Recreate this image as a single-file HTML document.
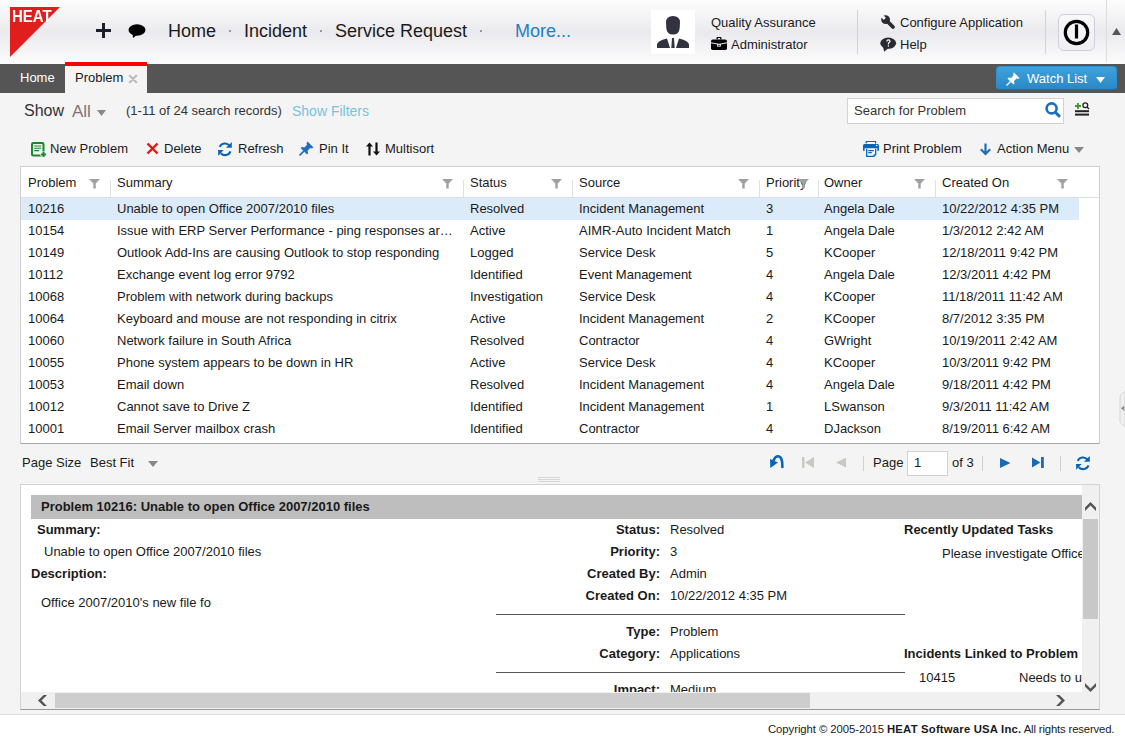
<!DOCTYPE html>
<html><head><meta charset="utf-8">
<style>
*{margin:0;padding:0;box-sizing:border-box}
html,body{width:1125px;height:744px;overflow:hidden;background:#f4f4f4;font-family:"Liberation Sans",sans-serif;color:#1a1a1a}
.a{position:absolute}
.t{position:absolute;white-space:nowrap;line-height:1}
#hdr{position:absolute;left:0;top:0;width:1125px;height:64px;background:linear-gradient(#fdfdfd 0%,#f5f5f7 22%,#eaeaee 50%,#f4f4f6 78%,#fbfbfb 100%)}
#bar{position:absolute;left:0;top:64px;width:1125px;height:29px;background:#555}
.nav{font-size:18px;color:#1a1a1a}
.dot{position:absolute;width:2px;height:2px;background:#999}
.vsep{position:absolute;width:1px;background:#d4d4d8}
.h13{font-size:13px;color:#1a1a1a}
.grid{position:absolute;left:20px;top:166px;width:1080px;height:278px;background:#fff;border:1px solid #cfcfcf;border-bottom-color:#a8a8a8}
.hsep{position:absolute;top:13px;width:1px;height:17px;background:#e2e2e2}
.fil{position:absolute;top:12px}
.row{position:absolute;left:0;width:1058px;height:22px}
.c{position:absolute;font-size:13px;line-height:22px;white-space:nowrap;color:#1a1a1a}
</style></head><body>
<div id="hdr"></div>
<!-- logo -->
<svg class="a" style="left:10px;top:7px" width="51" height="51" viewBox="0 0 51 51"><path d="M0 0H50L0 50Z" fill="#e01e1e"/></svg>
<div class="t" style="left:12px;top:8px;font-size:16.5px;font-weight:bold;color:#fff;transform:scaleX(0.91);transform-origin:0 0">HEAT</div>
<!-- plus + bubble -->
<svg class="a" style="left:96px;top:23px" width="15" height="15" viewBox="0 0 15 15"><path d="M6 0h3v6h6v3H9v6H6V9H0V6h6z" fill="#1e1e2a"/></svg>
<svg class="a" style="left:128px;top:24px" width="18" height="15" viewBox="0 0 18 15"><ellipse cx="9" cy="6" rx="8.5" ry="5.8" fill="#000"/><path d="M4.5 9 L5 14 L9.5 10.5Z" fill="#000"/></svg>
<div class="t nav" style="left:168px;top:22px">Home</div>
<div class="dot" style="left:229px;top:30px"></div>
<div class="t nav" style="left:244px;top:22px">Incident</div>
<div class="dot" style="left:320px;top:30px"></div>
<div class="t nav" style="left:335px;top:22px">Service Request</div>
<div class="dot" style="left:480px;top:30px"></div>
<div class="t nav" style="left:515px;top:22px;color:#1f80c2">More...</div>
<!-- avatar -->
<div class="a" style="left:651px;top:10px;width:44px;height:44px;background:#fff"></div>
<svg class="a" style="left:651px;top:10px" width="44" height="44" viewBox="0 0 44 44"><path d="M15 12.5 Q15 6 22 6 Q29 6 29 12.5 L28.7 18 Q28.2 24.6 22 24.6 Q15.8 24.6 15.3 18 Z M6 38 V34.5 Q6 31 16 28.4 L19 38 Z M38 38 V34.5 Q38 31 28 28.4 L25 38 Z M21 28 H23 L23.7 38 H20.3Z" fill="#33333f"/></svg>
<div class="t h13" style="left:711px;top:16px">Quality Assurance</div>
<svg class="a" style="left:711px;top:37px" width="16" height="13" viewBox="0 0 16 13"><path d="M5.5 2.6V1Q5.5 0 6.5 0h3Q10.5 0 10.5 1V2.6Z M6.8 1.1V2.6h2.4V1.1Z" fill="#000" fill-rule="evenodd"/><rect x="0" y="2.5" width="16" height="10.5" rx="1.8" fill="#000"/><path d="M0 5.8 Q8 8.8 16 5.8" stroke="#fff" stroke-width="0.9" fill="none"/><rect x="6.2" y="7" width="3.6" height="2.6" fill="#fff"/><rect x="7.2" y="7.8" width="1.6" height="1" fill="#000"/></svg>
<div class="t h13" style="left:731px;top:38px">Administrator</div>
<div class="vsep" style="left:857px;top:10px;height:44px"></div>
<!-- wrench -->
<svg class="a" style="left:881px;top:15px" width="15" height="15" viewBox="0 0 15 15"><defs><mask id="wm"><rect width="15" height="15" fill="#fff"/><path d="M0.06 -2.06 L4.9 2.8 L2.8 4.9 L-2.06 0.06Z" fill="#000"/></mask></defs><g mask="url(#wm)" fill="#2a2a35"><circle cx="4.6" cy="4.6" r="4.4"/></g><path d="M5.5 5.5 L12 12" stroke="#2a2a35" stroke-width="3.8" stroke-linecap="round"/></svg>
<div class="t h13" style="left:900px;top:16px">Configure Application</div>
<svg class="a" style="left:880px;top:37px" width="17" height="15" viewBox="0 0 17 15"><ellipse cx="8.2" cy="6.2" rx="7.9" ry="5.6" fill="#2a2a35"/><path d="M3 10 L4.3 14.8 L8.5 11Z" fill="#2a2a35"/><path d="M6.3 4.6 Q6.3 2.3 8.4 2.3 Q10.6 2.3 10.6 4.3 Q10.6 5.5 9.4 6 Q8.9 6.3 8.9 7.4 H7.8 Q7.7 5.6 8.7 5 Q9.4 4.7 9.4 4.2 Q9.4 3.4 8.4 3.4 Q7.5 3.4 7.5 4.6Z" fill="#fff"/><rect x="7.8" y="8.3" width="1.2" height="1.3" fill="#fff"/></svg>
<div class="t h13" style="left:900px;top:38px">Help</div>
<div class="vsep" style="left:1045px;top:10px;height:44px"></div>
<!-- power -->
<div class="a" style="left:1058px;top:14px;width:37px;height:37px;border:1px solid #d0d0dc;border-radius:6px;background:linear-gradient(#f8f8fa,#efeff3)"></div>
<svg class="a" style="left:1063px;top:19px" width="27" height="27" viewBox="0 0 27 27"><circle cx="13.5" cy="13.5" r="11.2" stroke="#000" stroke-width="3.2" fill="none"/><rect x="11.9" y="5.5" width="3.2" height="14" fill="#000"/></svg>
<div class="vsep" style="left:1106px;top:0;height:62px;background:#dcdcdc"></div>
<svg class="a" style="left:1112px;top:28px" width="9" height="7" viewBox="0 0 9 7"><path d="M0 7 L4.5 0 L9 7Z" fill="#555"/></svg>

<div id="bar"></div>
<div class="t" style="left:20px;top:71px;font-size:13px;color:#fff">Home</div>
<div class="a" style="left:65px;top:62px;width:82px;height:31px;background:#f4f4f4;border-top:4px solid #f00"></div>
<div class="t" style="left:75px;top:71px;font-size:13px;color:#1a1a1a">Problem</div>
<svg class="a" style="left:128px;top:74px" width="10" height="10" viewBox="0 0 10 10"><path d="M1.8 1.8L8.2 8.2M8.2 1.8L1.8 8.2" stroke="#bdbdbd" stroke-width="2.3" stroke-linecap="round"/></svg>
<!-- watch list -->
<div class="a" style="left:996px;top:66px;width:121px;height:24px;border-radius:4px;background:linear-gradient(#3fa2dc,#2a88c6);border:1px solid #2f8fd0;border-bottom-color:#1f6ea6"></div>
<svg class="a" style="left:1006px;top:72px" width="14" height="14" viewBox="0 0 14 14"><path d="M8 0.5 L13.5 6 L12 7 L10.5 6.5 L8 9 L8.5 11.5 L7.5 12.5 L1.5 6.5 L2.5 5.5 L5 6 L7.5 3.5 L7 2Z" fill="#fff"/><path d="M4.5 9.5 L0.5 13.5" stroke="#fff" stroke-width="1.3"/></svg>
<div class="t" style="left:1027px;top:72px;font-size:13px;color:#fff">Watch List</div>
<svg class="a" style="left:1096px;top:77px" width="9" height="6" viewBox="0 0 9 6"><path d="M0 0H9L4.5 6Z" fill="#fff"/></svg>

<!-- show row -->
<div class="t" style="left:24px;top:103px;font-size:16px;color:#333">Show</div>
<div class="t" style="left:72px;top:103px;font-size:17px;color:#777">All</div>
<svg class="a" style="left:97px;top:110px" width="9" height="6" viewBox="0 0 9 6"><path d="M0 0H9L4.5 6Z" fill="#888"/></svg>
<div class="t" style="left:126px;top:104px;font-size:13px;color:#333">(1-11 of 24 search records)</div>
<div class="t" style="left:292px;top:104px;font-size:14px;color:#76c3df">Show Filters</div>
<!-- search -->
<div class="a" style="left:847px;top:98px;width:217px;height:26px;background:#fff;border:1px solid #d2d2d2"></div>
<div class="t" style="left:854px;top:104px;font-size:13px;color:#333">Search for Problem</div>
<svg class="a" style="left:1045px;top:102px" width="16" height="16" viewBox="0 0 16 16"><circle cx="6.6" cy="6.4" r="5" stroke="#1a6fbf" stroke-width="2.6" fill="none"/><path d="M10.3 10.2 L14 13.9" stroke="#1a6fbf" stroke-width="3" stroke-linecap="round"/></svg>
<svg class="a" style="left:1074px;top:101px" width="16" height="16" viewBox="0 0 16 16"><path d="M4 2v6M1 5h6" stroke="#3a9a2a" stroke-width="1.8"/><circle cx="11.3" cy="4.3" r="2.4" stroke="#222" stroke-width="1.3" fill="none"/><path d="M13 6 L15 8" stroke="#222" stroke-width="1.5"/><rect x="1" y="9.2" width="14" height="2" fill="#222"/><rect x="1" y="12.6" width="14" height="2" fill="#222"/></svg>

<!-- toolbar -->
<svg class="a" style="left:31px;top:142px" width="16" height="16" viewBox="0 0 16 16"><rect x="1" y="1" width="11.5" height="12.5" rx="1.2" fill="none" stroke="#17892a" stroke-width="2"/><path d="M3.2 4h7M3.2 6.3h7M3.2 8.6h5" stroke="#17892a" stroke-width="1.1"/><path d="M12.5 9.5v6M9.5 12.5h6" stroke="#f4f4f4" stroke-width="3.6"/><path d="M12.5 10v5M10 12.5h5" stroke="#17892a" stroke-width="2"/></svg>
<div class="t" style="left:50px;top:142px;font-size:13px;color:#1a1a1a">New Problem</div>
<svg class="a" style="left:146px;top:142px" width="13" height="13" viewBox="0 0 13 13"><path d="M1.5 1.5L11.5 11.5M11.5 1.5L1.5 11.5" stroke="#e11" stroke-width="2.4"/></svg>
<div class="t" style="left:164px;top:142px;font-size:13px;color:#1a1a1a">Delete</div>
<svg class="a" style="left:218px;top:142px" width="15" height="15" viewBox="0 0 15 15"><path d="M1.7 4.9 A5.8 5.8 0 0 1 11.5 3.6" stroke="#0b63b8" stroke-width="2.1" fill="none"/><path d="M13.8 0 V5.8 H8Z" fill="#0b63b8"/><path d="M12.5 9.3 A5.8 5.8 0 0 1 2.8 11.2" stroke="#0b63b8" stroke-width="2.1" fill="none"/><path d="M0 8 L0.3 13.8 L5.6 8Z" fill="#0b63b8"/></svg>
<div class="t" style="left:238px;top:142px;font-size:13px;color:#1a1a1a">Refresh</div>
<svg class="a" style="left:299px;top:141px" width="15" height="15" viewBox="0 0 14 14"><path d="M8 0.5 L13.5 6 L12 7 L10.5 6.5 L8 9 L8.5 11.5 L7.5 12.5 L1.5 6.5 L2.5 5.5 L5 6 L7.5 3.5 L7 2Z" fill="#1f6dbd"/><path d="M4.5 9.5 L0.5 13.5" stroke="#1f6dbd" stroke-width="1.5"/></svg>
<div class="t" style="left:319px;top:142px;font-size:13px;color:#1a1a1a">Pin It</div>
<svg class="a" style="left:366px;top:142px" width="15" height="14" viewBox="0 0 15 14"><path d="M3.5 13.5V3" stroke="#111" stroke-width="2.2"/><path d="M0 4.5L3.5 0.5L7 4.5Z" fill="#111"/><path d="M10.5 0.5V11" stroke="#111" stroke-width="2.2"/><path d="M7 9.5L10.5 13.5L14 9.5Z" fill="#111"/></svg>
<div class="t" style="left:385px;top:142px;font-size:13px;color:#1a1a1a">Multisort</div>

<svg class="a" style="left:863px;top:141px" width="16" height="16" viewBox="0 0 16 16"><path d="M3.2 1.9 V0.9 Q3.2 0.3 4 0.3 H11.8 Q12.6 0.3 12.6 0.9 V1.9" stroke="#0b63b8" stroke-width="1.3" fill="none" stroke-linecap="round"/><path d="M0 4.5 Q0 3 1.5 3 H14.5 Q16 3 16 4.5 V9.2 Q16 10 15 10 H14.4 V7.3 H1.6 V10 H1 Q0 10 0 9.2Z" fill="#0b63b8"/><circle cx="13.6" cy="4.6" r="0.75" fill="#fff"/><path d="M3.7 7.8 V15.4 H10.8 L12.7 13.5 V7.8" stroke="#0b63b8" stroke-width="1.3" fill="none"/><path d="M10.6 15.6 V13.4 H12.8Z" fill="#0b63b8"/><path d="M5.3 9.6 H10.8 M5.3 11.6 H8.8" stroke="#0b63b8" stroke-width="1.1"/></svg>
<div class="t" style="left:883px;top:142px;font-size:13px;color:#1a1a1a">Print Problem</div>
<svg class="a" style="left:979px;top:142px" width="13" height="14" viewBox="0 0 13 14"><path d="M6.5 1.5V12M1.8 7.3L6.5 12L11.2 7.3" stroke="#1f6dbd" stroke-width="2.2" fill="none"/></svg>
<div class="t" style="left:997px;top:142px;font-size:13px;color:#1a1a1a">Action Menu</div>
<svg class="a" style="left:1074px;top:147px" width="10" height="6" viewBox="0 0 10 6"><path d="M0 0H10L5 6Z" fill="#888"/></svg>

<!-- grid -->
<div class="grid">
  <div class="a" style="left:0;top:30px;width:1078px;height:1px;background:#dedede"></div>
  <div class="c" style="left:7px;top:5px">Problem</div>
  <div class="c" style="left:96px;top:5px">Summary</div>
  <div class="c" style="left:449px;top:5px">Status</div>
  <div class="c" style="left:558px;top:5px">Source</div>
  <div class="c" style="left:745px;top:5px">Priority</div>
  <div class="c" style="left:803px;top:5px">Owner</div>
  <div class="c" style="left:921px;top:5px">Created On</div>
  <div class="hsep" style="left:89px"></div>
  <div class="hsep" style="left:442px"></div>
  <div class="hsep" style="left:551px"></div>
  <div class="hsep" style="left:738px"></div>
  <div class="hsep" style="left:797px"></div>
  <div class="hsep" style="left:914px"></div>
  <svg class="fil" style="left:68px" width="11" height="10" viewBox="0 0 11 10"><path d="M0 0H11L6.7 4.6V9.5H4.3V4.6Z" fill="#a0a0a0"/></svg>
  <svg class="fil" style="left:421px" width="11" height="10" viewBox="0 0 11 10"><path d="M0 0H11L6.7 4.6V9.5H4.3V4.6Z" fill="#a0a0a0"/></svg>
  <svg class="fil" style="left:530px" width="11" height="10" viewBox="0 0 11 10"><path d="M0 0H11L6.7 4.6V9.5H4.3V4.6Z" fill="#a0a0a0"/></svg>
  <svg class="fil" style="left:717px" width="11" height="10" viewBox="0 0 11 10"><path d="M0 0H11L6.7 4.6V9.5H4.3V4.6Z" fill="#a0a0a0"/></svg>
  <svg class="fil" style="left:777px" width="11" height="10" viewBox="0 0 11 10"><path d="M0 0H11L6.7 4.6V9.5H4.3V4.6Z" fill="#a0a0a0"/></svg>
  <svg class="fil" style="left:893px" width="11" height="10" viewBox="0 0 11 10"><path d="M0 0H11L6.7 4.6V9.5H4.3V4.6Z" fill="#a0a0a0"/></svg>
  <svg class="fil" style="left:1036px" width="11" height="10" viewBox="0 0 11 10"><path d="M0 0H11L6.7 4.6V9.5H4.3V4.6Z" fill="#a0a0a0"/></svg>
  <div id="rows">
<div class="row" style="top:31px; background:#dcebfa;"><div class="c" style="left:7px">10216</div><div class="c" style="left:96px">Unable to open Office 2007/2010 files</div><div class="c" style="left:449px">Resolved</div><div class="c" style="left:558px">Incident Management</div><div class="c" style="left:745px">3</div><div class="c" style="left:803px">Angela Dale</div><div class="c" style="left:921px">10/22/2012 4:35 PM</div></div>
<div class="row" style="top:53px;"><div class="c" style="left:7px">10154</div><div class="c" style="left:96px">Issue with ERP Server Performance - ping responses ar…</div><div class="c" style="left:449px">Active</div><div class="c" style="left:558px">AIMR-Auto Incident Match</div><div class="c" style="left:745px">1</div><div class="c" style="left:803px">Angela Dale</div><div class="c" style="left:921px">1/3/2012 2:42 AM</div></div>
<div class="row" style="top:75px;"><div class="c" style="left:7px">10149</div><div class="c" style="left:96px">Outlook Add-Ins are causing Outlook to stop responding</div><div class="c" style="left:449px">Logged</div><div class="c" style="left:558px">Service Desk</div><div class="c" style="left:745px">5</div><div class="c" style="left:803px">KCooper</div><div class="c" style="left:921px">12/18/2011 9:42 PM</div></div>
<div class="row" style="top:97px;"><div class="c" style="left:7px">10112</div><div class="c" style="left:96px">Exchange event log error 9792</div><div class="c" style="left:449px">Identified</div><div class="c" style="left:558px">Event Management</div><div class="c" style="left:745px">4</div><div class="c" style="left:803px">Angela Dale</div><div class="c" style="left:921px">12/3/2011 4:42 PM</div></div>
<div class="row" style="top:119px;"><div class="c" style="left:7px">10068</div><div class="c" style="left:96px">Problem with network during backups</div><div class="c" style="left:449px">Investigation</div><div class="c" style="left:558px">Service Desk</div><div class="c" style="left:745px">4</div><div class="c" style="left:803px">KCooper</div><div class="c" style="left:921px">11/18/2011 11:42 AM</div></div>
<div class="row" style="top:141px;"><div class="c" style="left:7px">10064</div><div class="c" style="left:96px">Keyboard and mouse are not responding in citrix</div><div class="c" style="left:449px">Active</div><div class="c" style="left:558px">Incident Management</div><div class="c" style="left:745px">2</div><div class="c" style="left:803px">KCooper</div><div class="c" style="left:921px">8/7/2012 3:35 PM</div></div>
<div class="row" style="top:163px;"><div class="c" style="left:7px">10060</div><div class="c" style="left:96px">Network failure in South Africa</div><div class="c" style="left:449px">Resolved</div><div class="c" style="left:558px">Contractor</div><div class="c" style="left:745px">4</div><div class="c" style="left:803px">GWright</div><div class="c" style="left:921px">10/19/2011 2:42 AM</div></div>
<div class="row" style="top:185px;"><div class="c" style="left:7px">10055</div><div class="c" style="left:96px">Phone system appears to be down in HR</div><div class="c" style="left:449px">Active</div><div class="c" style="left:558px">Service Desk</div><div class="c" style="left:745px">4</div><div class="c" style="left:803px">KCooper</div><div class="c" style="left:921px">10/3/2011 9:42 PM</div></div>
<div class="row" style="top:207px;"><div class="c" style="left:7px">10053</div><div class="c" style="left:96px">Email down</div><div class="c" style="left:449px">Resolved</div><div class="c" style="left:558px">Incident Management</div><div class="c" style="left:745px">4</div><div class="c" style="left:803px">Angela Dale</div><div class="c" style="left:921px">9/18/2011 4:42 PM</div></div>
<div class="row" style="top:229px;"><div class="c" style="left:7px">10012</div><div class="c" style="left:96px">Cannot save to Drive Z</div><div class="c" style="left:449px">Identified</div><div class="c" style="left:558px">Incident Management</div><div class="c" style="left:745px">1</div><div class="c" style="left:803px">LSwanson</div><div class="c" style="left:921px">9/3/2011 11:42 AM</div></div>
<div class="row" style="top:251px;"><div class="c" style="left:7px">10001</div><div class="c" style="left:96px">Email Server mailbox crash</div><div class="c" style="left:449px">Identified</div><div class="c" style="left:558px">Contractor</div><div class="c" style="left:745px">4</div><div class="c" style="left:803px">DJackson</div><div class="c" style="left:921px">8/19/2011 6:42 AM</div></div>
</div>
</div>

<!-- page size / pager -->
<div class="t" style="left:22px;top:456px;font-size:13px;color:#1a1a1a">Page Size</div>
<div class="t" style="left:90px;top:456px;font-size:13px;color:#1a1a1a">Best Fit</div>
<svg class="a" style="left:148px;top:461px" width="10" height="6" viewBox="0 0 10 6"><path d="M0 0H10L5 6Z" fill="#888"/></svg>
<svg class="a" style="left:768px;top:452px" width="17" height="18" viewBox="0 0 17 18"><path d="M14.4 15 C14.6 8 13 4.2 10 4.2 C7.8 4.2 6.5 6 5.5 8.5" stroke="#0a64b8" stroke-width="2.6" fill="none" stroke-linecap="round"/><path d="M2 6.9 L2.3 16 L10 10.5Z" fill="#0a64b8"/></svg>
<svg class="a" style="left:802px;top:457px" width="12" height="11" viewBox="0 0 12 11"><rect x="0" y="0" width="2.5" height="11" fill="#c9c9c3"/><path d="M12 0V11L3 5.5Z" fill="#c9c9c3"/></svg>
<svg class="a" style="left:834px;top:457px" width="12" height="11" viewBox="0 0 12 11"><path d="M12 0.5V10.5L2 5.5Z" fill="#c9c9c3"/></svg>
<div class="a" style="left:863px;top:456px;width:1px;height:15px;background:#d0d0d0"></div>
<div class="t" style="left:873px;top:456px;font-size:13px;color:#1a1a1a">Page</div>
<div class="a" style="left:907px;top:451px;width:41px;height:25px;background:#fff;border:1px solid #d2d2d2"></div>
<div class="t" style="left:914px;top:456px;font-size:13px;color:#1a1a1a">1</div>
<div class="t" style="left:952px;top:456px;font-size:13px;color:#1a1a1a">of 3</div>
<div class="a" style="left:982px;top:456px;width:1px;height:15px;background:#d0d0d0"></div>
<svg class="a" style="left:1000px;top:458px" width="11" height="10" viewBox="0 0 11 10"><path d="M0 0V10L10.5 5Z" fill="#1a6ab8"/></svg>
<svg class="a" style="left:1032px;top:457px" width="12" height="11" viewBox="0 0 12 11"><path d="M0 0.5V10.5L8.5 5.5Z" fill="#1a6ab8"/><rect x="9" y="0" width="2.8" height="11" fill="#1a6ab8"/></svg>
<div class="a" style="left:1060px;top:456px;width:1px;height:15px;background:#d0d0d0"></div>
<svg class="a" style="left:1076px;top:456px" width="15" height="15" viewBox="0 0 15 15"><path d="M1.7 4.9 A5.8 5.8 0 0 1 11.5 3.6" stroke="#0b63b8" stroke-width="2.1" fill="none"/><path d="M13.8 0 V5.8 H8Z" fill="#0b63b8"/><path d="M12.5 9.3 A5.8 5.8 0 0 1 2.8 11.2" stroke="#0b63b8" stroke-width="2.1" fill="none"/><path d="M0 8 L0.3 13.8 L5.6 8Z" fill="#0b63b8"/></svg>
<!-- splitter -->
<div class="a" style="left:538px;top:477px;width:22px;height:1px;background:#d6d6d6"></div>
<div class="a" style="left:538px;top:479px;width:22px;height:1px;background:#d6d6d6"></div>
<div class="a" style="left:538px;top:481px;width:22px;height:1px;background:#d6d6d6"></div>
<!-- detail panel -->
<div class="a" style="left:20px;top:484px;width:1080px;height:226px;background:#fff;border:1px solid #d4d4d4;border-bottom:1px solid #999;overflow:hidden">
 <div class="a" style="left:10px;top:10px;width:1051px;height:24px;background:#bebebe"></div>
 <div class="t" style="left:20px;top:15px;font-size:13px;font-weight:bold;color:#1a1a1a">Problem 10216: Unable to open Office 2007/2010 files</div>
 <div class="t" style="left:16px;top:38px;font-size:13px;font-weight:bold;color:#1a1a1a">Summary:</div>
 <div class="t" style="left:23px;top:60px;font-size:13px;color:#1a1a1a">Unable to open Office 2007/2010 files</div>
 <div class="t" style="left:10px;top:82px;font-size:13px;font-weight:bold;color:#1a1a1a">Description:</div>
 <div class="t" style="left:20px;top:111px;font-size:13px;color:#1a1a1a">Office 2007/2010's new file fo</div>
 <div class="t" style="right:439px;top:38px;font-size:13px;font-weight:bold;color:#1a1a1a">Status:</div>
 <div class="t" style="right:439px;top:60px;font-size:13px;font-weight:bold;color:#1a1a1a">Priority:</div>
 <div class="t" style="right:439px;top:82px;font-size:13px;font-weight:bold;color:#1a1a1a">Created By:</div>
 <div class="t" style="right:439px;top:104px;font-size:13px;font-weight:bold;color:#1a1a1a">Created On:</div>
 <div class="t" style="left:649px;top:38px;font-size:13px;color:#1a1a1a">Resolved</div>
 <div class="t" style="left:649px;top:60px;font-size:13px;color:#1a1a1a">3</div>
 <div class="t" style="left:649px;top:82px;font-size:13px;color:#1a1a1a">Admin</div>
 <div class="t" style="left:649px;top:104px;font-size:13px;color:#1a1a1a">10/22/2012 4:35 PM</div>
 <div class="a" style="left:475px;top:129px;width:409px;height:1px;background:#555"></div>
 <div class="t" style="right:439px;top:140px;font-size:13px;font-weight:bold;color:#1a1a1a">Type:</div>
 <div class="t" style="right:439px;top:162px;font-size:13px;font-weight:bold;color:#1a1a1a">Category:</div>
 <div class="t" style="left:649px;top:140px;font-size:13px;color:#1a1a1a">Problem</div>
 <div class="t" style="left:649px;top:162px;font-size:13px;color:#1a1a1a">Applications</div>
 <div class="a" style="left:475px;top:187px;width:409px;height:1px;background:#555"></div>
 <div class="t" style="right:439px;top:198px;font-size:13px;font-weight:bold;color:#1a1a1a">Impact:</div>
 <div class="t" style="left:649px;top:198px;font-size:13px;color:#1a1a1a">Medium</div>
 <div class="t" style="left:883px;top:38px;font-size:13px;font-weight:bold;color:#1a1a1a">Recently Updated Tasks</div>
 <div class="t" style="left:921px;top:62px;font-size:13px;color:#1a1a1a">Please investigate Office 2007/2010 file formats</div>
 <div class="t" style="left:883px;top:162px;font-size:13px;font-weight:bold;color:#1a1a1a">Incidents Linked to Problem</div>
 <div class="t" style="left:898px;top:186px;font-size:13px;color:#1a1a1a">10415</div>
 <div class="t" style="left:998px;top:186px;font-size:13px;color:#1a1a1a">Needs to update Office</div>
 <!-- v scrollbar -->
 <div class="a" style="left:1061px;top:0;width:17px;height:224px;background:#f0f0f0"></div>
 <svg class="a" style="left:1064px;top:17px" width="11" height="9" viewBox="0 0 11 9"><path d="M0 9 V5.6 L5.5 0 L11 5.6 V9 L5.5 3.5Z" fill="#555"/></svg>
 <div class="a" style="left:1062px;top:34px;width:15px;height:100px;background:#c8c8c8"></div>
 <svg class="a" style="left:1064px;top:198px" width="11" height="9" viewBox="0 0 11 9"><path d="M0 0 V3.4 L5.5 9 L11 3.4 V0 L5.5 5.5Z" fill="#555"/></svg>
 <!-- h scrollbar -->
 <div class="a" style="left:0;top:207px;width:1061px;height:17px;background:#f0f0f0"></div>
 <div class="a" style="left:34px;top:208px;width:755px;height:15px;background:#cdcdcd"></div>
 <svg class="a" style="left:17px;top:210px" width="9" height="11" viewBox="0 0 9 11"><path d="M9 0 H5.6 L0 5.5 L5.6 11 H9 L3.5 5.5Z" fill="#555"/></svg>
 <svg class="a" style="left:1035px;top:210px" width="9" height="11" viewBox="0 0 9 11"><path d="M0 0 H3.4 L9 5.5 L3.4 11 H0 L5.5 5.5Z" fill="#555"/></svg>
</div>
<!-- footer -->
<div class="a" style="left:0;top:714px;width:1125px;height:30px;background:#fff;border-top:1px solid #dcdcdc"></div>
<div class="t" style="left:768px;top:724px;font-size:11.3px;color:#1a1a1a"><span style="letter-spacing:-0.05px">Copyright © 2005-2015 </span><b style="letter-spacing:0.2px">HEAT Software USA Inc.</b><span style="letter-spacing:-0.15px"> All rights reserved.</span></div>
<!-- right side tab -->
<svg class="a" style="left:1119px;top:390px" width="6" height="38" viewBox="0 0 6 38"><path d="M6 1 L1 5.5 V32.5 L6 37Z" fill="#efefef" stroke="#d6d6d6" stroke-width="1"/><path d="M5.2 15.5 V21 L2 18.2Z" fill="#8a8a8a"/></svg>
</body></html>
